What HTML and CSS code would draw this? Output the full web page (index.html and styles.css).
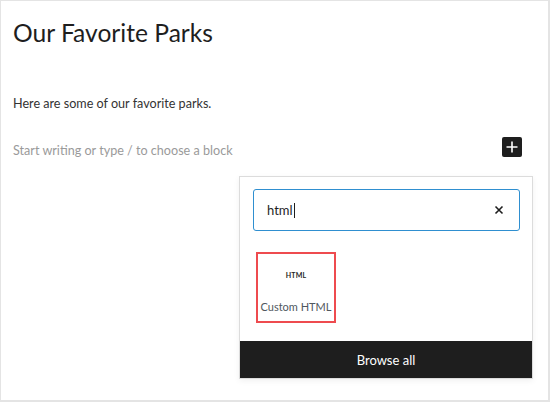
FILE: index.html
```html
<!DOCTYPE html>
<html>
<head>
<meta charset="utf-8">
<link rel="stylesheet" href="styles.css">
</head>
<body>
<div class="frame">
  <div class="editor">
    <h1 class="title">Our Favorite Parks</h1>
    <p class="para">Here are some of our favorite parks.</p>
    <div class="row">
      <span class="placeholder">Start writing or type / to choose a block</span>
      <span class="plus">
        <svg width="14" height="14" viewBox="0 0 14 14"><path d="M7 1.5v11M1.5 7h11" stroke="#fff" stroke-width="1.6"/></svg>
      </span>
    </div>
    <div class="popwrap">
      <div class="popover">
        <div class="searcharea">
          <div class="search">
            <span class="query">html</span><span class="caret"></span>
            <svg class="clear" width="12" height="12" viewBox="0 0 12 12"><path d="M2.5 2.5l7 7M9.5 2.5l-7 7" stroke="#1e1e1e" stroke-width="1.6"/></svg>
          </div>
        </div>
        <div class="results">
          <div class="item">
            <span class="badge">HTML</span>
            <span class="label">Custom HTML</span>
          </div>
        </div>
        <div class="browse">Browse all</div>
      </div>
    </div>
  </div>
</div>
</body>
</html>
```
FILE: styles.css
```css
* { box-sizing: border-box; }
html, body { margin: 0; padding: 0; background: #fff; }
body { font-family: "Lato", "Open Sans", sans-serif; }
.frame {
  width: 550px; height: 402px;
  border: 1px solid #e4e4e4;
  border-right-width: 2px; border-bottom-width: 2px;
  overflow: hidden;
}
.editor { padding: 0 0 0 12px; }
.title {
  margin: 0; padding-top: 16px;
  font-weight: 400; font-size: 24.6px; line-height: 32px;
  color: #1e1e1e;
}
.para {
  margin: 0; margin-top: 45px;
  font-size: 12.6px; line-height: 20px; color: #333;
}
.row {
  display: flex; align-items: center; justify-content: space-between;
  margin-top: 25px; padding-right: 26px;
  height: 20px;
}
.placeholder { font-size: 12.6px; color: #9a9a9a; margin-top: 2px; }
.plus {
  width: 20px; height: 20px; background: #1e1e1e; border-radius: 2px;
  display: flex; align-items: center; justify-content: center;
  margin-top: -4px;
}
.popwrap { display: flex; justify-content: flex-end; padding-right: 15px; margin-top: 17px; }
.popover {
  width: 294px; border: 1px solid #dcdcdc; background: #fff;
  box-shadow: 0 2px 6px rgba(0,0,0,0.06);
}
.searcharea { padding: 12px 12px 0 13px; }
.search {
  height: 42px; border: 1.5px solid #2f8fd0; border-radius: 3px;
  display: flex; align-items: center; padding: 0 14px 0 13px;
  font-size: 13px; color: #1e1e1e;
}
.caret { width: 1px; height: 15px; background: #1e1e1e; margin-left: 1px; }
.clear { margin-left: auto; }
.results { padding: 21px 0 17px 16px; height: 110px; }
.item {
  width: 80px; height: 71px; border: 2px solid #ee4b4f;
  display: flex; flex-direction: column; align-items: center;
}
.badge { font-size: 7px; font-weight: 700; color: #1e1e1e; margin-top: 17px; line-height: 8px; letter-spacing: 0.2px; }
.label { font-size: 11px; color: #50575e; margin-top: 21px; line-height: 14px; }
.browse {
  height: 37px; background: #1e1e1e; color: #fff;
  display: flex; align-items: center; justify-content: center;
  font-size: 13px;
}
```
